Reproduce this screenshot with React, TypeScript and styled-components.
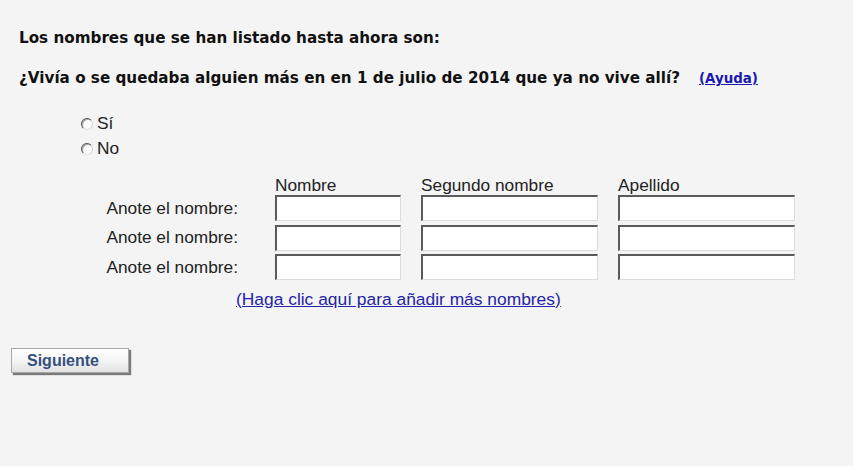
import React from "react";
import styled, { createGlobalStyle } from "styled-components";

const Global = createGlobalStyle`
  html, body { margin: 0; padding: 0; background: #f4f4f4; }
  body { width: 853px; height: 466px; overflow: hidden; }
`;

const Page = styled.form`
  display: flex;
  flex-direction: column;
  align-items: flex-start;
  padding: 29px 0 0 0;
  font-family: "Liberation Sans", Arial, sans-serif;
  color: #111;
`;

const Heading = styled.p<{ $top: number }>`
  margin: ${(p) => p.$top}px 0 0 19px;
  font-family: "DejaVu Sans", Verdana, sans-serif;
  font-weight: bold;
  font-size: 15.2px;
  line-height: 18px;
  height: 18px;
  color: #111;
  white-space: nowrap;
`;

const HelpLink = styled.a`
  margin-left: 19px;
  font-size: 13.4px;
  color: #1a1ab0;
  text-decoration: underline;
`;

const RadioGroup = styled.div`
  display: flex;
  flex-direction: column;
  margin: 24px 0 0 81px;
`;

const RadioRow = styled.label`
  display: flex;
  align-items: center;
  height: 25px;
  font-size: 17.3px;
  line-height: 25px;
  color: #222;
`;

const Radio = styled.input`
  appearance: none;
  -webkit-appearance: none;
  box-sizing: border-box;
  width: 12px;
  height: 12px;
  margin: 0 4px 0 0;
  border-radius: 50%;
  border: 1.5px solid;
  border-color: #505050 #d0d0d0 #e0e0e0 #555555;
  background: #fcfcfc;
  box-shadow: inset 1px 1px 0 #a8a8a8;
  flex: none;
`;

const NameGrid = styled.div`
  display: grid;
  grid-template-columns: 155px 126px 177px 177px;
  column-gap: 20px;
  row-gap: 3.5px;
  margin: 15px 0 0 100px;
  font-size: 17.3px;
  line-height: 19px;
  color: #222;
`;

const ColHead = styled.div`
  height: 19px;
  margin-bottom: -3.5px;
  white-space: nowrap;
`;

const RowLabel = styled.div`
  display: flex;
  align-items: center;
  justify-content: flex-end;
  padding-right: 17px;
  white-space: nowrap;
`;

const TextBox = styled.input`
  box-sizing: border-box;
  width: 100%;
  height: 26px;
  margin: 0;
  padding: 2px 4px;
  background: #fefefe;
  border-style: solid;
  border-width: 2px 1px 1px 2px;
  border-color: #5a5a5a #dcdcdc #dcdcdc #5a5a5a;
  font-family: "Liberation Sans", Arial, sans-serif;
  font-size: 15px;
  outline: none;
`;

const AddLink = styled.a`
  margin: 9.5px 0 0 236px;
  font-size: 17.4px;
  line-height: 19px;
  color: #2424a8;
  text-decoration: underline;
  white-space: nowrap;
`;

const NextButton = styled.button`
  box-sizing: border-box;
  margin: 39.5px 0 0 11px;
  width: 118px;
  height: 25px;
  padding: 0 0 0 15px;
  text-align: left;
  border: 1px solid #a8a8a8;
  background: linear-gradient(#ffffff, #f6f6f6 45%, #e2e2e2);
  box-shadow: 2px 2px 1px #7a7a7a;
  font-family: "Liberation Sans", Arial, sans-serif;
  font-weight: bold;
  font-size: 16px;
  color: #34507c;
  cursor: pointer;
`;

const columns = ["Nombre", "Segundo nombre", "Apellido"];

export default function App() {
  return (
    <>
      <Global />
      <Page onSubmit={(e) => e.preventDefault()}>
        <Heading $top={0}>Los nombres que se han listado hasta ahora son:</Heading>
        <Heading $top={22}>
          ¿Vivía o se quedaba alguien más en en 1 de julio de 2014 que ya no vive allí?
          <HelpLink href="#">(Ayuda)</HelpLink>
        </Heading>
        <RadioGroup>
          <RadioRow>
            <Radio type="radio" name="otro" />
            Sí
          </RadioRow>
          <RadioRow>
            <Radio type="radio" name="otro" />
            No
          </RadioRow>
        </RadioGroup>
        <NameGrid>
          <div />
          {columns.map((c) => (
            <ColHead key={c}>{c}</ColHead>
          ))}
          {[0, 1, 2].map((r) => (
            <React.Fragment key={r}>
              <RowLabel>Anote el nombre:</RowLabel>
              {columns.map((c) => (
                <TextBox key={c} type="text" aria-label={c} />
              ))}
            </React.Fragment>
          ))}
        </NameGrid>
        <AddLink href="#">(Haga clic aquí para añadir más nombres)</AddLink>
        <NextButton type="submit">Siguiente</NextButton>
      </Page>
    </>
  );
}
